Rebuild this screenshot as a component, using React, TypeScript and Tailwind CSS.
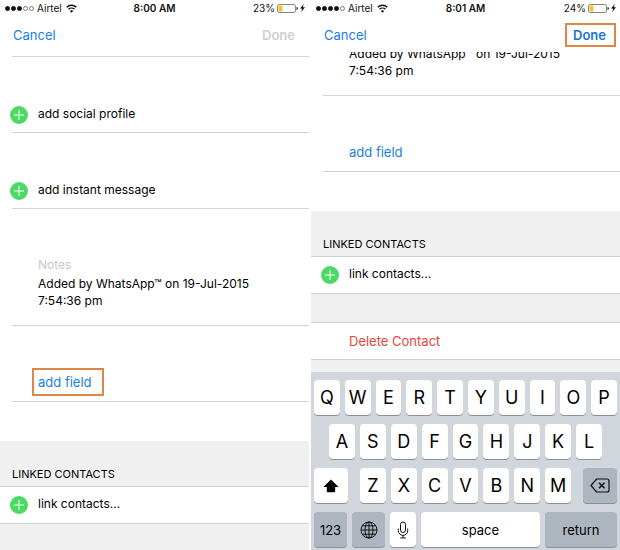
import type { ReactNode } from "react";
import clsx from "clsx";

function WifiIcon() {
  return (
    <svg viewBox="0 0 24 18" className="h-[9px] w-[11px]" fill="none" stroke="#111" strokeWidth="3">
      <path d="M1.5 6.5C7.5.5 16.5.5 22.5 6.5" />
      <path d="M5.5 10.8c3.700-3.600 9.300-3.600 13 0" />
      <path d="M12 18 8.200 14.200c2.200-2 5.400-2 7.600 0z" fill="#111" stroke="none" />
    </svg>
  );
}

function BatteryIcon() {
  return (
    <svg viewBox="0 0 42 18" className="h-[9px] w-[21px]">
      <rect x="1" y="1" width="36" height="16" rx="3.500" fill="#fff" stroke="#777" strokeWidth="1.800" />
      <path d="M4.500 3H11v12H4.500A1.500 1.500 0 0 1 3 13.500v-9A1.500 1.500 0 0 1 4.500 3z" fill="#f5c42c" />
      <path d="M39 6c2 .6 2.800 1.600 2.800 3S41 11.400 39 12z" fill="#222" />
    </svg>
  );
}

function BoltIcon() {
  return (
    <svg viewBox="0 0 10 16" className="h-2 w-[5px]" fill="#111">
      <path d="M7.500 0 0 9h4.200L2.500 16 10 6.500H5.600z" />
    </svg>
  );
}

function PlusCircle() {
  return (
    <svg viewBox="0 0 18 18" className="size-[18px] shrink-0">
      <circle cx="9" cy="9" r="9" fill="#4cd964" />
      <path d="M9 4v10M4 9h10" stroke="#fff" strokeWidth="1" />
    </svg>
  );
}

function ShiftIcon() {
  return (
    <svg viewBox="0 0 16 14" className="h-[14px] w-4" fill="#000">
      <path d="M8 .5 15.600 8h-3.400v4.500a.8.8 0 0 1-.8.8H4.600a.8.8 0 0 1-.8-.8V8H.4z" />
    </svg>
  );
}

function BackspaceIcon() {
  return (
    <svg viewBox="0 0 20 15" className="h-[15px] w-5" fill="none" stroke="#111" strokeWidth="1.200">
      <path d="M6.600 1h10.400a2 2 0 0 1 2 2v9a2 2 0 0 1-2 2H6.600L1 7.500z" strokeLinejoin="round" />
      <path d="m9 4.700 5.600 5.600M14.600 4.700 9 10.300" strokeWidth="1.500" />
    </svg>
  );
}

function GlobeIcon() {
  return (
    <svg viewBox="0 0 18 18" className="size-[18px]" fill="none" stroke="#111" strokeWidth="1">
      <circle cx="9" cy="9" r="8" />
      <ellipse cx="9" cy="9" rx="4" ry="8" />
      <path d="M9 1v16M1 9h16M2.500 4.800h13M2.500 13.200h13" />
    </svg>
  );
}

function MicIcon() {
  return (
    <svg viewBox="0 0 12 18" className="h-[18px] w-3" fill="none" stroke="#111" strokeWidth="1">
      <rect x="3.500" y="1" width="5" height="10.500" rx="2.500" />
      <path d="M1.300 7.500v2.200a4.700 4.700 0 0 0 9.400 0V7.500M6 14.400v2.400M3.200 16.900h5.600" />
    </svg>
  );
}

function StatusBar({ signal, time, battery }: { signal: number; time: string; battery: string }) {
  return (
    <div className="grid h-4 grid-cols-3 items-center text-[10px] leading-4 text-[#111]">
      <div className="flex items-center pl-[5px]">
        <div className="flex gap-px">
          {[0, 1, 2, 3, 4].map((i) => (
            <span
              key={i}
              className={clsx("size-[5px] rounded-full border", i < signal ? "border-[#111] bg-[#111]" : "border-[#777]")}
            />
          ))}
        </div>
        <span className="mr-1 ml-[3px]">Airtel</span>
        <WifiIcon />
      </div>
      <div className="text-center font-semibold">{time}</div>
      <div className="flex items-center justify-end gap-0.5 pr-1">
        <span>{battery}</span>
        <BatteryIcon />
        <BoltIcon />
      </div>
    </div>
  );
}

function NavBar({ children }: { children: ReactNode }) {
  return (
    <nav className="flex h-9 items-center justify-between pt-0.5 pr-[14px] pl-[13px]">
      <button className="text-[#1a80e5]">Cancel</button>
      {children}
    </nav>
  );
}

function AddRow({ label }: { label: string }) {
  return (
    <div className="ml-3 flex h-[76px] items-end border-b border-[#d4d4d6] pb-2">
      <button className="-ml-0.5 flex items-center gap-[10px] text-xs">
        <PlusCircle />
        <span className="pb-0.5">{label}</span>
      </button>
    </div>
  );
}

function AddField({ highlighted }: { highlighted?: boolean }) {
  return (
    <div className="ml-3 flex h-[76px] items-end border-b border-[#d4d4d6] pb-[9px] pl-[26px]">
      <button className="relative text-[#1a80e5]">
        add field
        {highlighted && <span className="absolute -inset-y-1 -right-3 -left-1.5 border-2 border-[#dc8748]" />}
      </button>
    </div>
  );
}

function Notes({ id }: { id: string }) {
  return (
    <textarea
      id={id}
      rows={2}
      aria-label="Notes"
      defaultValue="Added by WhatsApp™ on 19-Jul-2015 7:54:36 pm"
      className="block w-full resize-none overflow-hidden bg-transparent text-xs leading-[17px] outline-none"
    />
  );
}

function LinkedContacts() {
  return (
    <section className="mt-[39px]">
      <h2 className="flex h-[46px] items-end border-b border-[#d0d0d2] bg-[#f0f0f0] pb-1 pl-3 text-[11px] leading-4">
        LINKED CONTACTS
      </h2>
      <button className="flex h-[37px] w-full items-center gap-[10px] border-b border-[#d0d0d2] pl-[10px] text-xs">
        <PlusCircle />
        <span className="pb-0.5">link contacts...</span>
      </button>
    </section>
  );
}

function Key({ children, className, label }: { children: ReactNode; className?: string; label?: string }) {
  return (
    <button
      aria-label={label}
      className={clsx(
        "flex h-[35px] items-center justify-center rounded shadow-[0_1px_0_#8c9096]",
        className ?? "bg-white text-lg",
      )}
    >
      {children}
    </button>
  );
}

function Letters({ keys }: { keys: string }) {
  return keys.split("").map((k) => <Key key={k}>{k}</Key>);
}

function Keyboard() {
  return (
    <div className="flex grow flex-col gap-[9px] bg-[#d1d5dc] px-[3px] pt-2 pb-[3px]">
      <div className="grid grid-cols-10 gap-[5px]">
        <Letters keys="QWERTYUIOP" />
      </div>
      <div className="grid grid-cols-9 gap-[5px] px-[15px]">
        <Letters keys="ASDFGHJKL" />
      </div>
      <div className="flex justify-between">
        <Key label="shift" className="w-[34px] bg-white">
          <ShiftIcon />
        </Key>
        <div className="mx-3 grid grow grid-cols-7 gap-[5px]">
          <Letters keys="ZXCVBNM" />
        </div>
        <Key label="delete" className="w-[34px] bg-[#adb5be]">
          <BackspaceIcon />
        </Key>
      </div>
      <div className="flex gap-[5px]">
        <Key className="w-[33px] bg-[#adb5be]">123</Key>
        <Key label="next keyboard" className="w-[33px] bg-[#adb5be]">
          <GlobeIcon />
        </Key>
        <Key label="dictate" className="w-[26px] bg-white">
          <MicIcon />
        </Key>
        <Key className="grow bg-white">space</Key>
        <Key className="w-[72px] bg-[#adb5be]">return</Key>
      </div>
    </div>
  );
}

export default function App() {
  return (
    <main className="grid min-h-screen grid-cols-2 gap-0.5 bg-white font-['Inter',sans-serif] text-[13px] leading-5 text-black">
      <div className="flex flex-col">
        <StatusBar signal={3} time="8:00 AM" battery="23%" />
        <NavBar>
          <button disabled className="font-semibold text-[#cfcfd1]">
            Done
          </button>
        </NavBar>
        <div className="ml-3 h-[5px] border-b border-[#d4d4d6]" />
        <AddRow label="add social profile" />
        <AddRow label="add instant message" />
        <div className="ml-3 h-[117px] border-b border-[#d4d4d6] pt-[46px] pr-8 pl-[26px]">
          <label htmlFor="notes-left" className="block text-xs leading-5 text-[#c7c7cc]">
            Notes
          </label>
          <Notes id="notes-left" />
        </div>
        <AddField highlighted />
        <LinkedContacts />
        <div className="grow bg-[#f0f0f0]" />
      </div>

      <div className="flex flex-col">
        <StatusBar signal={4} time="8:01 AM" battery="24%" />
        <NavBar>
          <button className="relative font-semibold text-[#1a72d9]">
            Done
            <span className="absolute -inset-y-0.5 -right-2.5 -left-2 border-2 border-[#dc8748]" />
          </button>
        </NavBar>
        {/* notes are scrolled partly under the nav bar */}
        <div className="ml-3 h-11 overflow-hidden border-b border-[#d4d4d6] pr-8 pl-[26px]">
          <div className="-mt-[7px]">
            <Notes id="notes-right" />
          </div>
        </div>
        <AddField />
        <LinkedContacts />
        <div className="h-[29px] border-b border-[#d0d0d2] bg-[#f0f0f0]" />
        <button className="h-[37px] border-b border-[#d0d0d2] pl-[38px] text-left text-[#e5463c]">
          Delete Contact
        </button>
        <div className="h-3 bg-[#f0f0f0]" />
        <Keyboard />
      </div>
    </main>
  );
}
